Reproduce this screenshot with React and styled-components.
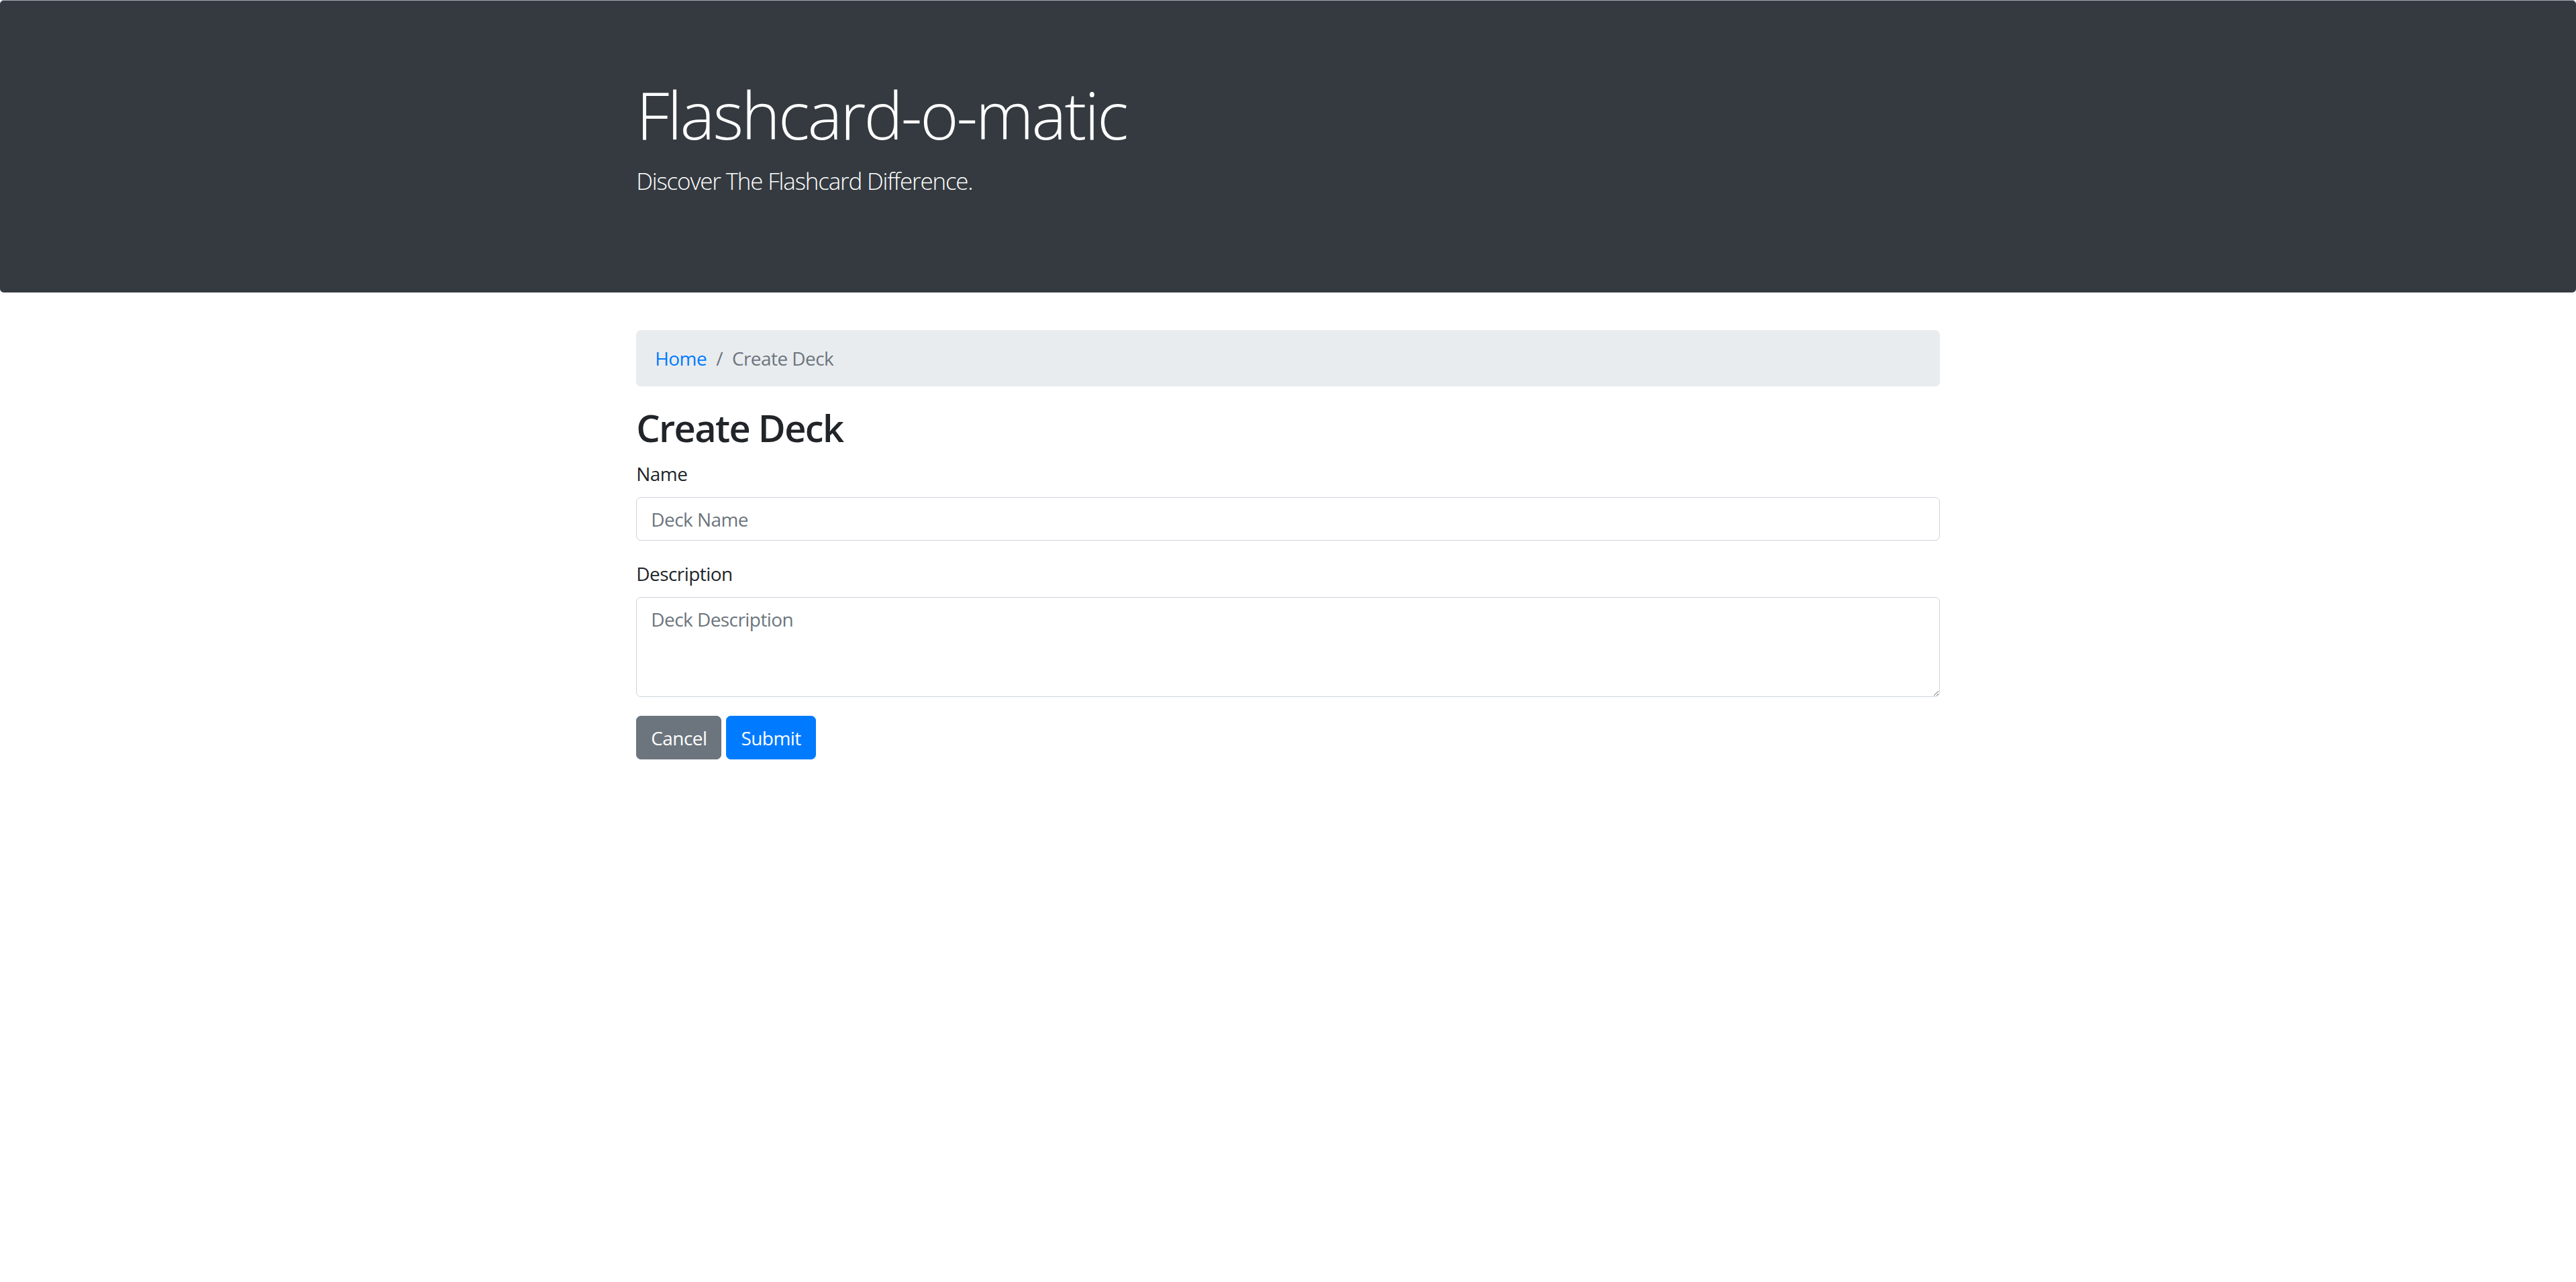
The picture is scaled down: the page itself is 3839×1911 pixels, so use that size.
import React from 'react';
import styled, { createGlobalStyle } from 'styled-components';

const GlobalStyle = createGlobalStyle`
  *, *::before, *::after {
    box-sizing: border-box;
  }
  html {
    font-size: 28px;
  }
  body {
    margin: 0;
    font-family: 'Segoe UI', 'Open Sans', 'Noto Sans', 'Liberation Sans', sans-serif;
    font-size: 1rem;
    line-height: 1.5;
    color: #212529;
    background-color: #fff;
  }
`;

const Jumbotron = styled.header`
  padding: 4rem 2rem;
  margin-bottom: 2rem;
  background-color: #343a40;
  color: #fff;
  border-radius: 0.2rem;
  box-shadow: inset 0 1px 0 #a7acb9;
`;

const Container = styled.div`
  width: 100%;
  max-width: 1995px;
  margin: 0 auto;
  padding: 0 26.25px;
`;

const Title = styled.h1`
  margin: 0 0 0.5rem;
  font-size: 3.5rem;
  font-weight: 300;
  line-height: 1.2;
  letter-spacing: -0.031em;
`;

const Lead = styled.p`
  margin: 0 0 1rem;
  font-size: 1.25rem;
  font-weight: 300;
  letter-spacing: -0.034em;
`;

const Breadcrumb = styled.ol`
  display: flex;
  flex-wrap: wrap;
  list-style: none;
  padding: 0.75rem 1rem;
  margin: 0 0 1rem;
  background-color: #e9ecef;
  border-radius: 0.25rem;
  letter-spacing: -0.02em;
`;

const Crumb = styled.li`
  color: ${(p) => (p.$active ? '#6c757d' : 'inherit')};

  &:not(:first-child)::before {
    content: '/';
    display: inline-block;
    padding: 0 0.5rem;
    color: #6c757d;
  }
`;

const CrumbLink = styled.a`
  color: #007bff;
  text-decoration: none;
`;

const Heading = styled.h2`
  margin: 0 0 0.5rem;
  font-size: 2rem;
  font-weight: 600;
  line-height: 1.2;
  letter-spacing: -0.03em;
`;

const FormGroup = styled.div`
  margin-bottom: 1rem;
`;

const Label = styled.label`
  display: inline-block;
  margin-bottom: 0.5rem;
  letter-spacing: -0.02em;
`;

const fieldStyles = `
  display: block;
  width: 100%;
  padding: 0.375rem 0.75rem;
  font-family: inherit;
  font-size: 1rem;
  font-weight: 400;
  line-height: 1.5;
  color: #495057;
  background-color: #fff;
  border: 1px solid #ced4da;
  border-radius: 0.25rem;
  outline: none;
  letter-spacing: -0.02em;

  &::placeholder {
    color: #6c757d;
    opacity: 1;
  }
`;

const Input = styled.input`
  ${fieldStyles}
  height: calc(1.5em + 0.75rem + 2px);
`;

const TextArea = styled.textarea`
  ${fieldStyles}
  height: calc(4.5em + 0.75rem + 2px);
  margin: 0;
  resize: vertical;
`;

const ButtonRow = styled.div`
  display: flex;
  gap: 0.25rem;
`;

const Button = styled.button`
  display: inline-block;
  padding: 0.375rem 0.75rem;
  font-family: inherit;
  font-size: 1rem;
  font-weight: 400;
  line-height: 1.5;
  letter-spacing: -0.02em;
  color: #fff;
  background-color: ${(p) => (p.$variant === 'primary' ? '#007bff' : '#6c757d')};
  border: 1px solid ${(p) => (p.$variant === 'primary' ? '#007bff' : '#6c757d')};
  border-radius: 0.25rem;
  cursor: pointer;
`;

const App = () => {
  return (
    <>
      <GlobalStyle />
      <Jumbotron>
        <Container>
          <Title>Flashcard-o-matic</Title>
          <Lead>Discover The Flashcard Difference.</Lead>
        </Container>
      </Jumbotron>
      <Container>
        <nav aria-label='breadcrumb'>
          <Breadcrumb>
            <Crumb>
              <CrumbLink href='#'>Home</CrumbLink>
            </Crumb>
            <Crumb $active>Create Deck</Crumb>
          </Breadcrumb>
        </nav>
        <Heading>Create Deck</Heading>
        <form onSubmit={(e) => e.preventDefault()}>
          <FormGroup>
            <Label htmlFor='name'>Name</Label>
            <Input id='name' type='text' placeholder='Deck Name' />
          </FormGroup>
          <FormGroup>
            <Label htmlFor='description'>Description</Label>
            <TextArea id='description' rows='3' placeholder='Deck Description' />
          </FormGroup>
          <ButtonRow>
            <Button type='button' $variant='secondary'>
              Cancel
            </Button>
            <Button type='submit' $variant='primary'>
              Submit
            </Button>
          </ButtonRow>
        </form>
      </Container>
    </>
  );
};

export default App;
